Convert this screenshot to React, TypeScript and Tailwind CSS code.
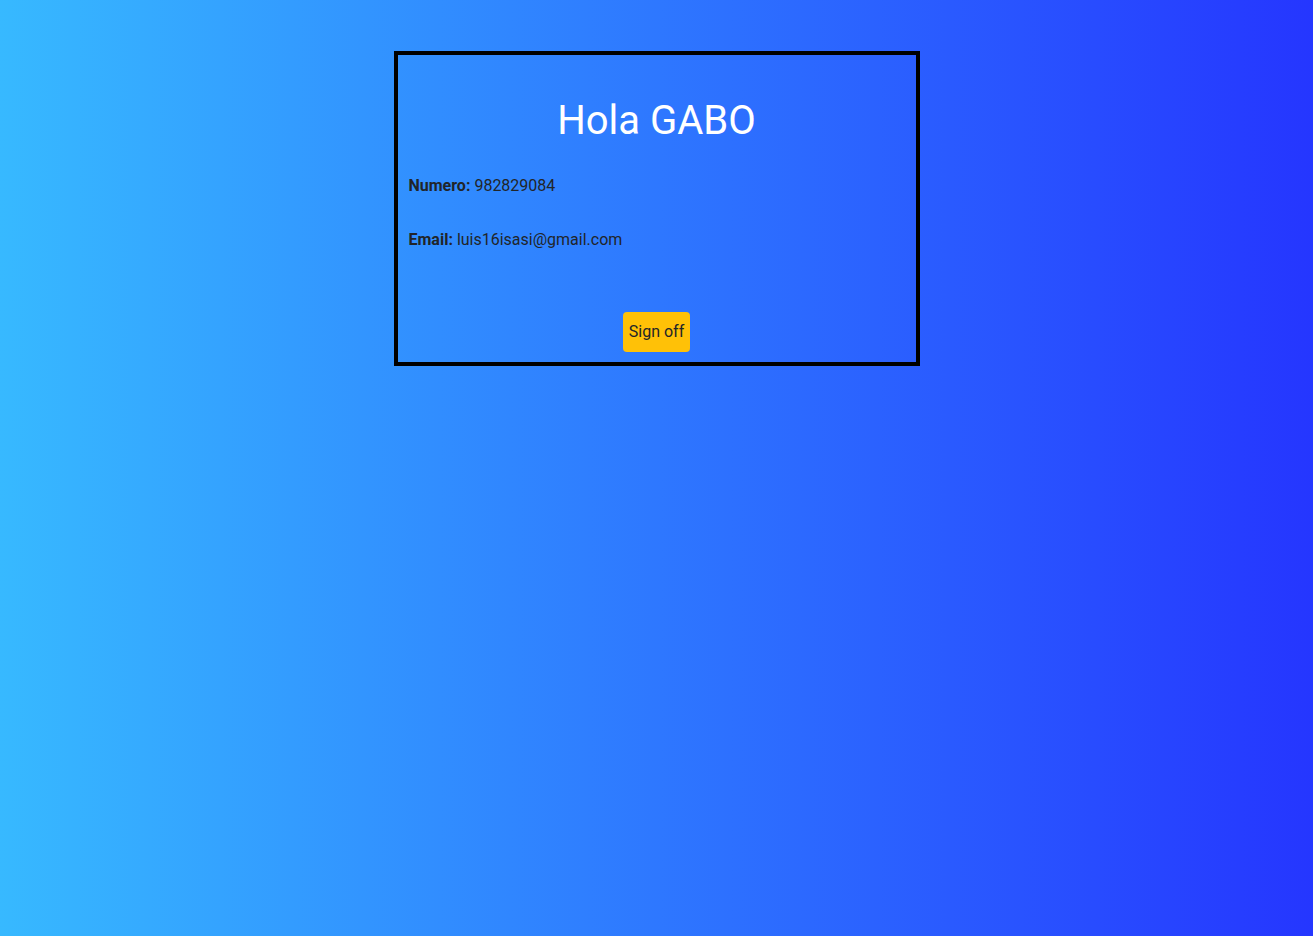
export default function App() {
  return (
    <div
      className="min-h-screen bg-[linear-gradient(to_right,#37b9ff,#2536ff)] pt-[51px] text-[#212529]"
      style={{ fontFamily: 'Roboto, "Liberation Sans", sans-serif' }}
    >
      <div className="mx-auto w-[526px] border-4 border-black px-[11px] pb-[10px]">
        {/* saludo */}
        <h1 className="mt-[42px] text-center text-[40px] leading-[48px] font-normal text-white">
          Hola GABO
        </h1>

        <p className="mt-[29px] text-base leading-6">
          <span className="font-bold">Numero:</span> 982829084
        </p>
        <p className="mt-[30px] text-base leading-6">
          <span className="font-bold">Email:</span> luis16isasi@gmail.com
        </p>

        <button className="mx-auto mt-[60px] block h-[40px] rounded bg-[#ffc107] px-[6px] text-base leading-6 text-[#212529]">
          Sign off
        </button>
      </div>
    </div>
  )
}
